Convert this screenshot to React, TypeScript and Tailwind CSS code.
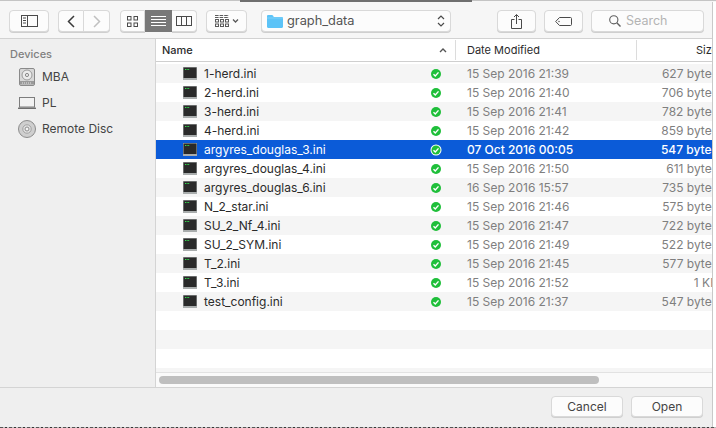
const font = { fontFamily: 'Inter, "Liberation Sans", sans-serif' };

interface FileRow {
  name: string;
  date: string;
  size: string;
}

const files: FileRow[] = [
  { name: '1-herd.ini', date: '15 Sep 2016 21:39', size: '627 bytes' },
  { name: '2-herd.ini', date: '15 Sep 2016 21:40', size: '706 bytes' },
  { name: '3-herd.ini', date: '15 Sep 2016 21:41', size: '782 bytes' },
  { name: '4-herd.ini', date: '15 Sep 2016 21:42', size: '859 bytes' },
  { name: 'argyres_douglas_3.ini', date: '07 Oct 2016 00:05', size: '547 bytes' },
  { name: 'argyres_douglas_4.ini', date: '15 Sep 2016 21:50', size: '611 bytes' },
  { name: 'argyres_douglas_6.ini', date: '16 Sep 2016 15:57', size: '735 bytes' },
  { name: 'N_2_star.ini', date: '15 Sep 2016 21:46', size: '575 bytes' },
  { name: 'SU_2_Nf_4.ini', date: '15 Sep 2016 21:47', size: '722 bytes' },
  { name: 'SU_2_SYM.ini', date: '15 Sep 2016 21:49', size: '522 bytes' },
  { name: 'T_2.ini', date: '15 Sep 2016 21:45', size: '577 bytes' },
  { name: 'T_3.ini', date: '15 Sep 2016 21:52', size: '1 KB' },
  { name: 'test_config.ini', date: '15 Sep 2016 21:37', size: '547 bytes' },
];

// ─── Icons ────────────────────────────────────────────────────────────────────

function SidebarIcon() {
  return (
    <svg width="17" height="12" viewBox="0 0 17 12" fill="none" stroke="#4a4a4a">
      <rect x="0.5" y="0.5" width="16" height="11" />
      <path d="M6.5 0.5v11M2 3h3M2 5.5h3M2 8h3" />
    </svg>
  );
}

function ChevronIcon({ left, color }: { left?: boolean; color: string }) {
  return (
    <svg width="8" height="13" viewBox="0 0 8 13" fill="none" stroke={color} strokeWidth="1.5">
      <path d={left ? 'M7 1 1.5 6.5 7 12' : 'M1 1l5.5 5.5L1 12'} />
    </svg>
  );
}

function IconViewIcon() {
  return (
    <svg width="11" height="11" viewBox="0 0 11 11" fill="none" stroke="#4a4a4a">
      <rect x="0.5" y="0.5" width="3.5" height="3.5" />
      <rect x="7" y="0.5" width="3.5" height="3.5" />
      <rect x="0.5" y="7" width="3.5" height="3.5" />
      <rect x="7" y="7" width="3.5" height="3.5" />
    </svg>
  );
}

function ListViewIcon() {
  return (
    <svg width="15" height="11" viewBox="0 0 15 11" stroke="#fff">
      <path d="M0 0.5h15M0 3.5h15M0 6.5h15M0 9.5h15" />
    </svg>
  );
}

function ColumnViewIcon() {
  return (
    <svg width="16" height="10" viewBox="0 0 16 10" fill="none" stroke="#4a4a4a">
      <rect x="0.5" y="0.5" width="15" height="9" />
      <path d="M5.5 0.5v9M10.5 0.5v9" />
    </svg>
  );
}

function ArrangeIcon() {
  return (
    <svg width="24" height="12" viewBox="0 0 24 12" fill="none" stroke="#5a5a5a">
      <path d="M0 0.5h14M0 2.5h14" strokeDasharray="3.6 1" />
      <rect x="0.5" y="4.5" width="3" height="2.5" />
      <rect x="5.5" y="4.5" width="3" height="2.5" />
      <rect x="10.5" y="4.5" width="3" height="2.5" />
      <rect x="0.5" y="9" width="3" height="2.5" />
      <rect x="5.5" y="9" width="3" height="2.5" />
      <rect x="10.5" y="9" width="3" height="2.5" />
      <path d="M18 4.5l2.5 2.5L23 4.5" strokeWidth="1.3" />
    </svg>
  );
}

function FolderIcon() {
  return (
    <svg width="16" height="13" viewBox="0 0 16 13">
      <path d="M0 1.2C0 .5.5 0 1.2 0h3.6c.6 0 .9.2 1.2.6L6.8 2H14.8c.7 0 1.2.5 1.2 1.2v8.6c0 .7-.5 1.2-1.2 1.2H1.2C.5 13 0 12.5 0 11.8z" fill="#5cc3f7" />
      <path d="M0 3h16" stroke="#86d4fa" strokeWidth="0.8" />
    </svg>
  );
}

function UpDownIcon() {
  return (
    <svg width="8" height="14" viewBox="0 0 8 14" fill="none" stroke="#4a4a4a" strokeWidth="1.2">
      <path d="M1 5l3-3 3 3M1 9l3 3 3-3" />
    </svg>
  );
}

function ShareIcon() {
  return (
    <svg width="11" height="15" viewBox="0 0 11 15" fill="none" stroke="#4a4a4a">
      <path d="M3.5 5.5H.5v9h10v-9h-3M5.5 10V.8M3 3l2.5-2.5L8 3" />
    </svg>
  );
}

function TagIcon() {
  return (
    <svg width="17" height="9" viewBox="0 0 17 9" fill="none" stroke="#4a4a4a">
      <path d="M4.5.5h11c.6 0 1 .4 1 1v6c0 .6-.4 1-1 1h-11L.7 4.5z" />
      <circle cx="4" cy="4.5" r="0.7" fill="#4a4a4a" stroke="none" />
    </svg>
  );
}

function SearchIcon() {
  return (
    <svg width="12" height="12" viewBox="0 0 12 12" fill="none" stroke="#5f5f5f" strokeWidth="1.1">
      <circle cx="4.8" cy="4.8" r="4.1" />
      <path d="M7.8 7.8l3.7 3.7" strokeWidth="1.4" />
    </svg>
  );
}

function CaretUpIcon() {
  return (
    <svg width="8" height="5" viewBox="0 0 8 5" fill="none" stroke="#555" strokeWidth="1.4">
      <path d="M1 4l3-3 3 3" />
    </svg>
  );
}

function DriveIcon() {
  return (
    <svg width="16" height="18" viewBox="0 0 16 18">
      <rect x="0.5" y="0.5" width="15" height="17" rx="1.5" fill="#d8d8d8" stroke="#8a8a8a" />
      <path d="M1 13h14v3.5H1z" fill="#9a9a9a" />
      <ellipse cx="8" cy="7" rx="5" ry="5" fill="#ececec" stroke="#9a9a9a" />
      <circle cx="8" cy="7" r="1.6" fill="none" stroke="#8a8a8a" />
      <path d="M3 15h10" stroke="#e4e4e4" strokeDasharray="1 1" />
    </svg>
  );
}

function LaptopIcon() {
  return (
    <svg width="18" height="12" viewBox="0 0 18 12">
      <rect x="1.5" y="0.5" width="15" height="9.5" fill="#f2f2f2" stroke="#7d7d7d" />
      <rect x="0" y="10.5" width="18" height="1.5" rx="0.5" fill="#6e6e6e" />
    </svg>
  );
}

function DiscIcon() {
  return (
    <svg width="18" height="18" viewBox="0 0 18 18">
      <circle cx="9" cy="9" r="8.5" fill="#cfcfcf" stroke="#8c8c8c" />
      <circle cx="9" cy="9" r="4.2" fill="#e4e4e4" stroke="#a0a0a0" />
      <circle cx="9" cy="9" r="2" fill="#f4f4f4" stroke="#8c8c8c" />
    </svg>
  );
}

function TerminalIcon() {
  return (
    <svg width="14" height="13" viewBox="0 0 14 13" className="shrink-0">
      <rect x="0" y="0" width="14" height="13" fill="#a9adad" />
      <rect x="0.5" y="0.5" width="13" height="10.5" fill="#2a2a2a" />
      <path d="M2 2.5h1M3.6 2.5h1M5.2 2.5h1" stroke="#35e04f" />
    </svg>
  );
}

function StatusIcon({ selected }: { selected: boolean }) {
  return (
    <svg width="12" height="12" viewBox="0 0 12 12">
      <circle cx="6" cy="6" r={selected ? 5.5 : 5} fill={selected ? '#fff' : '#1fbf3a'} />
      {selected && <circle cx="6" cy="6" r="4.5" fill="#1fbf3a" />}
      <path d="M3.5 6.2 5.3 8l3.2-3.6" fill="none" stroke="#fff" strokeWidth="1.4" />
    </svg>
  );
}

// ─── Toolbar ──────────────────────────────────────────────────────────────────

const btn = 'flex h-[22px] items-center justify-center rounded-[4px] border border-[#d9d9d9] bg-[#fcfcfc] shadow-[0_1px_0_#cfcfcf]';

function Toolbar() {
  return (
    <div className="flex h-[37px] shrink-0 items-start border-b border-[#d2d2d2] bg-[#f6f6f6] pl-[9px] pt-[8px]">
      <button className={`${btn} w-[40px]`}><SidebarIcon /></button>
      <div className="ml-[9px] flex">
        <button className={`${btn} w-[26px] rounded-r-none`}><ChevronIcon left color="#3a3a3a" /></button>
        <button className={`${btn} w-[26px] rounded-l-none border-l-0`}><ChevronIcon color="#c0c0c0" /></button>
      </div>
      <div className="ml-[10px] flex">
        <button className={`${btn} w-[25px] rounded-r-none`}><IconViewIcon /></button>
        <button className="flex h-[22px] w-[27px] items-center justify-center bg-[#787878]"><ListViewIcon /></button>
        <button className={`${btn} w-[25px] rounded-l-none border-l-0`}><ColumnViewIcon /></button>
      </div>
      <button className={`${btn} ml-[9px] w-[41px]`}><ArrangeIcon /></button>
      <button className={`${btn} ml-[14px] w-[190px] justify-start pl-[5px] pr-[5px]`}>
        <FolderIcon />
        <span className="ml-[4px] text-[12.8px] text-[#555]">graph_data</span>
        <span className="ml-auto flex"><UpDownIcon /></span>
      </button>
      <button className={`${btn} ml-[46px] w-[39px]`}><ShareIcon /></button>
      <button className={`${btn} ml-[8px] w-[39px]`}><TagIcon /></button>
      <div className={`${btn} ml-[8px] w-[113px] justify-start pl-[17px]`}>
        <SearchIcon />
        <span className="ml-[5px] text-[12.5px] text-[#b4b4b4]">Search</span>
      </div>
    </div>
  );
}

// ─── Sidebar ──────────────────────────────────────────────────────────────────

function SidebarItem({ icon, label }: { icon: React.ReactNode; label: string }) {
  return (
    <div className="flex h-[26px] items-center">
      <div className="flex w-[42px] shrink-0 justify-center pl-[12px]">{icon}</div>
      <span className="text-[12px] text-[#444]">{label}</span>
    </div>
  );
}

function Sidebar() {
  return (
    <aside className="w-[156px] shrink-0 border-r border-[#d4d4d4] bg-[#efefef] pt-[8px]">
      <div className="pl-[10px] text-[11px] font-medium leading-[14px] text-[#808080]">Devices</div>
      <div className="mt-[3px]">
        <SidebarItem icon={<DriveIcon />} label="MBA" />
        <SidebarItem icon={<LaptopIcon />} label="PL" />
        <SidebarItem icon={<DiscIcon />} label="Remote Disc" />
      </div>
    </aside>
  );
}

// ─── File list ────────────────────────────────────────────────────────────────

function Row({ file, index }: { file: FileRow; index: number }) {
  const selected = index === 4;
  const bg = selected ? 'bg-[#0b5bd8]' : index % 2 === 0 ? 'bg-[#f5f5f5]' : 'bg-white';
  return (
    <div className={`flex h-[19px] items-center text-[12px] ${bg}`}>
      <div className="flex w-[300px] shrink-0 items-center pl-[27px] pr-[14px]">
        <TerminalIcon />
        <span className={`ml-[7px] ${selected ? 'text-white' : 'text-[#2b2b2b]'}`}>{file.name}</span>
        <span className="ml-auto flex"><StatusIcon selected={selected} /></span>
      </div>
      <div className={`w-[181px] shrink-0 pl-[11px] ${selected ? 'font-medium text-white' : 'text-[#7f7f7f]'}`}>{file.date}</div>
      <div className={`w-[81px] shrink-0 text-right ${selected ? 'font-medium text-white' : 'text-[#7f7f7f]'}`}>{file.size}</div>
    </div>
  );
}

function FileList() {
  return (
    <div className="flex min-w-0 flex-1 flex-col">
      <div className="h-[23px] shrink-0 overflow-hidden border-b border-[#cfcfcf] bg-white">
        <div className="flex h-[22px] w-[562px] items-center text-[11px] text-[#2b2b2b]">
          <div className="flex w-[299px] shrink-0 items-center pl-[6px] pr-[8px] font-medium">
            Name
            <span className="ml-auto flex"><CaretUpIcon /></span>
          </div>
          <div className="h-[20px] w-px shrink-0 bg-[#dcdcdc]" />
          <div className="w-[180px] shrink-0 pl-[11px]">Date Modified</div>
          <div className="h-[20px] w-px shrink-0 bg-[#dcdcdc]" />
          <div className="w-[81px] shrink-0 text-right">Size</div>
        </div>
      </div>
      <div className="min-h-0 flex-1 overflow-hidden bg-white pt-[2px]">
        <div className="w-[562px]">
          {files.map((file, i) => (
            <Row key={file.name} file={file} index={i} />
          ))}
          <div className="h-[19px] bg-white" />
          <div className="h-[19px] bg-[#f5f5f5]" />
          <div className="h-[19px] bg-white" />
          <div className="h-[19px] bg-[#f5f5f5]" />
        </div>
      </div>
      <div className="h-[15px] shrink-0 border-t border-[#e2e2e2] bg-[#fafafa] pl-[3px] pt-[3px]">
        <div className="h-[8px] w-[440px] rounded-full bg-[#bfbfbf]" />
      </div>
    </div>
  );
}

// ─── App ──────────────────────────────────────────────────────────────────────

export default function App() {
  return (
    <div className="flex h-[428px] w-[716px] flex-col overflow-hidden bg-white" style={font}>
      <div className="flex h-[2px] shrink-0 bg-[#f6f6f6]">
        <div className="h-[1px] w-[240px] bg-[#c4c4c4]" />
        <div className="h-[2px] w-[232px] bg-[#6f6f6f]" />
        <div className="h-[1px] flex-1 bg-[#c4c4c4]" />
      </div>
      <div className="flex min-h-0 flex-1">
        <div className="flex w-[713px] shrink-0 flex-col border-r border-[#c9c9c9]">
          <Toolbar />
          <div className="flex min-h-0 flex-1">
            <Sidebar />
            <FileList />
          </div>
          <div className="flex h-[40px] shrink-0 items-start justify-end gap-[8px] border-t border-[#d4d4d4] bg-[#efefef] pr-[9px] pt-[8px]">
            <button className="h-[21px] w-[72px] rounded-[4px] border border-[#d9d9d9] bg-[#fcfcfc] pt-px text-[12px] text-[#444] shadow-[0_1px_0_#cfcfcf]">Cancel</button>
            <button className="h-[21px] w-[72px] rounded-[4px] border border-[#d9d9d9] bg-[#fcfcfc] pt-px text-[12px] text-[#444] shadow-[0_1px_0_#cfcfcf]">Open</button>
          </div>
        </div>
      </div>
      <div className="h-px shrink-0 bg-[repeating-linear-gradient(90deg,#555_0,#555_3px,#bbb_3px,#bbb_5px,#333_5px,#333_7px,#ccc_7px,#ccc_9px)]" />
    </div>
  );
}
